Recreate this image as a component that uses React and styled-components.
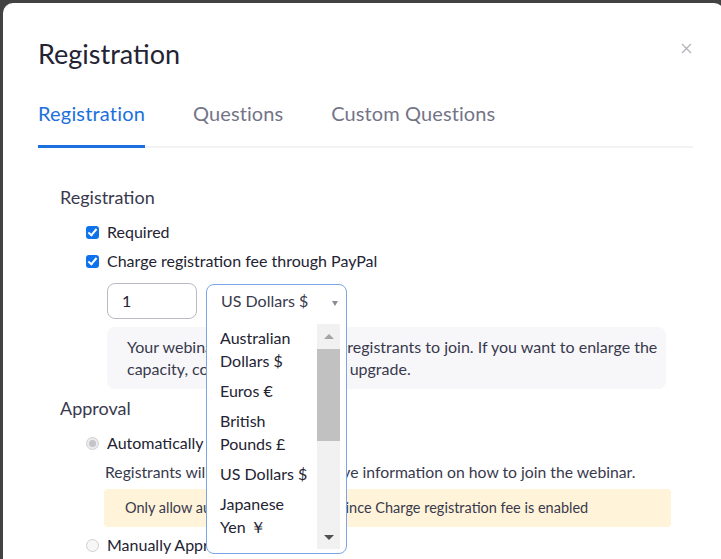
import React from 'react'
import styled, { createGlobalStyle } from 'styled-components'

const GlobalStyle = createGlobalStyle`
  html, body {
    margin: 0;
    padding: 0;
    height: 100%;
    overflow: hidden;
    background: #424242;
  }
  body {
    font-family: Lato, "Open Sans", "Liberation Sans", sans-serif;
    color: #232333;
  }
`

const currencies = ['Australian Dollars $', 'Euros €', 'British Pounds £', 'US Dollars $', 'Japanese Yen ￥']

const App = () => {
    return (
        <>
        <GlobalStyle />
        <Modal>
            <Header>
                <Title>Registration</Title>
                <CloseButton aria-label="close">
                    <svg width="11" height="11" viewBox="0 0 11 11">
                        <path d="M1 1L10 10M10 1L1 10" stroke="#b3b3bd" strokeWidth="1.3" fill="none" />
                    </svg>
                </CloseButton>
            </Header>

            <TabBar>
                <Tab active>Registration</Tab>
                <Tab>Questions</Tab>
                <Tab>Custom Questions</Tab>
            </TabBar>

            <Content>
                <SectionTitle>Registration</SectionTitle>
                <OptionRow>
                    <Checkbox checked />
                    <span>Required</span>
                </OptionRow>
                <OptionRow>
                    <Checkbox checked />
                    <span>Charge registration fee through PayPal</span>
                </OptionRow>

                <FeeRow>
                    <AmountInput>1</AmountInput>
                    <SelectWrap>
                        <SelectPopup>
                            <SelectHead>
                                US Dollars $
                                <Caret />
                            </SelectHead>
                            <ListBox>
                                <ListItems>
                                    {currencies.map(c => <ListItem key={c}>{c}</ListItem>)}
                                </ListItems>
                                <Scrollbar>
                                    <ScrollArrow up />
                                    <ScrollTrack>
                                        <ScrollThumb />
                                    </ScrollTrack>
                                    <ScrollArrow />
                                </Scrollbar>
                            </ListBox>
                        </SelectPopup>
                    </SelectWrap>
                </FeeRow>

                <InfoBox>
                    Your webinar allows up to 100{'\u2002'}registrants to join. If you want to enlarge the<br />
                    capacity, contact your admin to upgrade.
                </InfoBox>

                <SectionTitle approval>Approval</SectionTitle>
                <OptionRow>
                    <Radio checked disabled />
                    <span>Automatically Approve</span>
                </OptionRow>
                <Hint>Registrants will automatically receive information on how to join the webinar.</Hint>
                <WarnBox>Only allow automatically approve since Charge registration fee is enabled</WarnBox>
                <OptionRow>
                    <Radio />
                    <span>Manually Approve</span>
                </OptionRow>
            </Content>
        </Modal>
        </>
    )
}

export default App

const Modal = styled.div`
    margin: 3px 0 0 3px;
    width: 721px;
    height: 556px;
    overflow: hidden;
    background: #fff;
    border-radius: 10px 10px 0 0;
    box-sizing: border-box;
    padding: 0 31px 0 35px;
`

const Header = styled.div`
    display: flex;
    justify-content: space-between;
    align-items: flex-start;
    padding-top: 35px;
`

const Title = styled.h1`
    margin: 0;
    font-size: 27px;
    line-height: 32px;
    font-weight: 400;
    color: #232333;
`

const CloseButton = styled.div`
    margin-top: 5px;
    margin-right: 1px;
    width: 11px;
    height: 11px;
    display: flex;
`

const TabBar = styled.div`
    margin-top: 31px;
    display: flex;
    gap: 48px;
    border-bottom: 2px solid #f3f3f6;
`

const Tab = styled.div`
    font-size: 20px;
    line-height: 24px;
    padding-bottom: 20px;
    margin-bottom: -2px;
    letter-spacing: ${p => p.active ? '0.18px' : '0.1px'};
    color: ${p => p.active ? '#1b70dd' : '#747487'};
    border-bottom: 3px solid ${p => p.active ? '#1b70dd' : 'transparent'};
`

const Content = styled.div`
    padding-left: 22px;
    padding-top: 37px;
    display: flex;
    flex-direction: column;
    align-items: flex-start;
`

const SectionTitle = styled.div`
    font-size: 18px;
    line-height: 24px;
    color: #39394d;
    margin-top: ${p => p.approval ? '7px' : '0'};
    margin-bottom: 12px;
`

const OptionRow = styled.label`
    display: flex;
    align-items: center;
    gap: 8px;
    padding-left: 26px;
    font-size: 16px;
    line-height: 22px;
    color: #232333;
    margin-bottom: 7px;
`

const Checkbox = styled.span`
    width: 13px;
    height: 13px;
    border-radius: 3px;
    background: #0e72ed;
    position: relative;
    flex-shrink: 0;
    &::after {
        content: '';
        position: absolute;
        left: 4px;
        top: 1.5px;
        width: 3px;
        height: 7px;
        border: solid #fff;
        border-width: 0 2px 2px 0;
        transform: rotate(40deg);
    }
`

const Radio = styled.span`
    width: 13px;
    height: 13px;
    border-radius: 50%;
    box-sizing: border-box;
    border: 1px solid #cfcfd4;
    background: ${p => p.checked ? '#ececec' : '#f7f7f7'};
    flex-shrink: 0;
    position: relative;
    &::after {
        content: '';
        display: ${p => p.checked ? 'block' : 'none'};
        position: absolute;
        left: 2px;
        top: 2px;
        width: 7px;
        height: 7px;
        border-radius: 50%;
        background: #c5c5c9;
    }
`

const FeeRow = styled.div`
    display: flex;
    gap: 9px;
    margin-left: 47px;
    margin-top: 4px;
`

const AmountInput = styled.div`
    width: 90px;
    height: 36px;
    box-sizing: border-box;
    border: 1px solid #babac4;
    border-radius: 8px;
    padding-left: 14px;
    font-size: 16px;
    line-height: 34px;
    color: #232333;
`

const SelectWrap = styled.div`
    position: relative;
    width: 141px;
    height: 36px;
    margin-top: 1px;
`

const SelectPopup = styled.div`
    position: absolute;
    top: 0;
    left: 0;
    width: 141px;
    height: 270px;
    box-sizing: border-box;
    border: 1px solid #7aa6e6;
    border-radius: 8px;
    background: #fff;
    display: flex;
    flex-direction: column;
    overflow: hidden;
    z-index: 2;
`

const SelectHead = styled.div`
    height: 39px;
    flex-shrink: 0;
    display: flex;
    align-items: flex-start;
    justify-content: space-between;
    padding: 5px 8px 0 14px;
    box-sizing: border-box;
    font-size: 16px;
    line-height: 22px;
    color: #39394d;
`

const Caret = styled.span`
    margin-top: 11px;
    width: 0;
    height: 0;
    border-left: 3.5px solid transparent;
    border-right: 3.5px solid transparent;
    border-top: 5px solid #8c8c96;
`

const ListBox = styled.div`
    flex: 1;
    display: flex;
    padding-right: 6px;
    padding-bottom: 4px;
    overflow: hidden;
`

const ListItems = styled.div`
    flex: 1;
    margin-top: -2px;
    padding-left: 13px;
`

const ListItem = styled.div`
    font-size: 16px;
    line-height: 23px;
    padding: 3.5px 0;
    width: 90px;
    color: #232333;
`

const Scrollbar = styled.div`
    width: 23px;
    background: #f1f1f1;
    display: flex;
    flex-direction: column;
    align-items: center;
`

const ScrollArrow = styled.span`
    height: 24px;
    width: 100%;
    flex-shrink: 0;
    display: flex;
    align-items: center;
    justify-content: center;
    &::before {
        content: '';
        width: 0;
        height: 0;
        border-left: 5px solid transparent;
        border-right: 5px solid transparent;
        ${p => p.up
            ? 'border-bottom: 5px solid #a3a3a3;'
            : 'border-top: 5px solid #505050;'}
    }
`

const ScrollTrack = styled.div`
    flex: 1;
    width: 100%;
    padding: 1px 0 0;
`

const ScrollThumb = styled.div`
    width: 100%;
    height: 92px;
    background: #c1c1c1;
`

const InfoBox = styled.div`
    margin-left: 47px;
    margin-top: 7px;
    width: 559px;
    box-sizing: border-box;
    padding: 9px 10px 9px 20px;
    background: #f7f7fa;
    border-radius: 8px;
    font-size: 16px;
    line-height: 22px;
    color: #39394d;
    white-space: nowrap;
`

const Hint = styled.div`
    margin-left: 45px;
    margin-top: 0;
    font-size: 15.75px;
    line-height: 22px;
    color: #39394d;
`

const WarnBox = styled.div`
    margin-left: 44px;
    margin-top: 6px;
    margin-bottom: 7px;
    width: 567px;
    height: 38px;
    box-sizing: border-box;
    padding-left: 21px;
    background: #fff4d9;
    border-radius: 4px;
    font-size: 14.5px;
    line-height: 38px;
    color: #39394d;
`
